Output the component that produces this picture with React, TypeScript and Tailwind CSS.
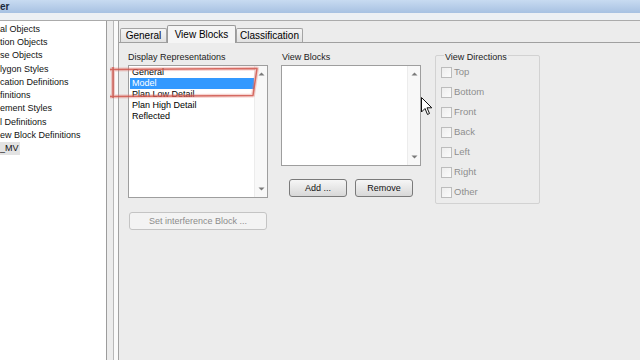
const treeItems = [
  'al Objects',
  'tion Objects',
  'se Objects',
  'lygon Styles',
  'cation Definitions',
  'finitions',
  'ement Styles',
  'l Definitions',
  'ew Block Definitions',
]

const representations = ['General', 'Model', 'Plan Low Detail', 'Plan High Detail', 'Reflected']
const directions = ['Top', 'Bottom', 'Front', 'Back', 'Left', 'Right', 'Other']

const Arrow = ({ down }: { down?: boolean }) => (
  <svg width="7" height="4" viewBox="0 0 7 4" className="block">
    <path d={down ? 'M0.5 0.5 L6.5 0.5 L3.5 3.5 Z' : 'M0.5 3.5 L6.5 3.5 L3.5 0.5 Z'} fill="#7a7a7a" />
  </svg>
)

const ScrollTrack = ({ downGap }: { downGap: string }) => (
  <div className="flex w-[13px] flex-col items-center justify-between border-l border-[#ececec] bg-[#f8f8f8]">
    <div className="mt-[6px]">
      <Arrow />
    </div>
    <div className={downGap}>
      <Arrow down />
    </div>
  </div>
)

const Tab = ({ label, active, width }: { label: string; active?: boolean; width: string }) => (
  <div
    className={
      active
        ? `-mb-px flex h-[18px] items-center justify-center rounded-t-[2px] border border-b-0 border-[#9a9a9a] bg-[#f5f5f5] ${width}`
        : `flex h-[14px] items-center justify-center rounded-t-[2px] border border-b-0 border-[#a4a4a4] bg-gradient-to-b from-[#f5f5f5] to-[#e1e1e1] ${width}`
    }
  >
    <span className={active ? 'text-[10px]' : 'pt-[1px] text-[10px]'}>{label}</span>
  </div>
)

const PushButton = ({ label, width, disabled }: { label: string; width: string; disabled?: boolean }) => (
  <div
    className={
      disabled
        ? `flex h-[18px] items-center justify-center rounded-[3px] border border-[#c4c4c4] bg-[#f3f3f3] text-[#8c8c8c] ${width}`
        : `flex h-[18px] items-center justify-center rounded-[3px] border border-[#7a7a7a] bg-gradient-to-b from-[#f6f6f6] to-[#d8d8d8] text-[#111] ${width}`
    }
  >
    {label}
  </div>
)

export default function App() {
  return (
    <div className="relative flex h-[360px] w-[640px] flex-col overflow-hidden bg-[#ececec] font-['Liberation_Sans',Arial,sans-serif] text-[9px] leading-none text-black">
      <div className="h-[13px] bg-gradient-to-b from-[#c8dbf1] to-[#a7c1e2] pt-[2px] text-[10px] font-bold text-[#1b2a3f]">er</div>
      <div className="h-[7px] bg-[#edf0f4]" />

      <div className="flex flex-1 border-t border-[#ababab]">
        {/* tree */}
        <div className="w-[107px] border-r border-[#9c9c9c] bg-white pt-[1.5px] text-[#111]">
          {treeItems.map((item) => (
            <div key={item} className="flex h-[13.3px] items-center whitespace-nowrap">
              {item}
            </div>
          ))}
          <div className="flex h-[13.3px] items-center">
            <span className="flex h-[13px] w-[20px] items-center bg-[#e3e3e3]">_MV</span>
          </div>
        </div>

        {/* splitter */}
        <div className="flex w-[11px]">
          <div className="w-[6px]" />
          <div className="w-px bg-[#b8b8b8]" />
          <div className="w-[4px] bg-[#fafafa]" />
        </div>

        {/* tab pane */}
        <div className="flex flex-1 flex-col border-l border-[#a2a2a2]">
          <div className="flex h-[22px] items-end border-b border-[#a0a0a0] pl-px">
            <Tab label="General" width="w-[47px]" />
            <Tab label="View Blocks" width="w-[69px]" active />
            <Tab label="Classification" width="w-[67px]" />
          </div>

          <div className="flex pl-[9px] pt-[9px]">
            {/* display representations */}
            <div className="flex w-[140px] flex-col">
              <div className="h-[11px] leading-[11px] text-[#222]">Display Representations</div>
              <div className="mt-[2px] flex h-[133px] border border-[#9e9e9e] bg-white">
                <div className="flex-1 pl-px pt-px">
                  {representations.map((rep) => (
                    <div
                      key={rep}
                      className={
                        rep === 'Model'
                          ? 'flex h-[11px] items-center bg-[#3399ff] pl-[2px] text-white'
                          : 'flex h-[11px] items-center pl-[2px]'
                      }
                    >
                      {rep}
                    </div>
                  ))}
                </div>
                <ScrollTrack downGap="mb-[6px]" />
              </div>
              <div className="ml-px mt-[14px]">
                <PushButton label="Set interference Block ..." width="w-[138px]" disabled />
              </div>
            </div>

            {/* view blocks */}
            <div className="ml-[13px] flex w-[140px] flex-col">
              <div className="h-[11px] pl-px leading-[11px] text-[#222]">View Blocks</div>
              <div className="mt-[2px] flex h-[101px] border border-[#9e9e9e] bg-white">
                <div className="flex-1" />
                <ScrollTrack downGap="mb-[6px]" />
              </div>
              <div className="mt-[13px] flex gap-[8px] pl-[8px]">
                <PushButton label="Add ..." width="w-[58px]" />
                <PushButton label="Remove" width="w-[58px]" />
              </div>
            </div>

            {/* view directions */}
            <div className="ml-[14px] mt-[3px] flex h-[149px] w-[105px] flex-col rounded-[2px] border border-[#d2d2d2]">
              <div className="-mt-[4px] ml-[8px] h-[11px] w-fit bg-[#ececec] px-px leading-[11px] text-[#222]">
                View Directions
              </div>
              <div className="-mt-[1px] flex flex-col pl-[5px]">
                {directions.map((dir) => (
                  <div key={dir} className="flex h-[20px] items-center">
                    <div className="h-[11px] w-[11px] border border-[#bcbcbc] bg-gradient-to-br from-[#ededed] to-[#fbfbfb]" />
                    <span className="ml-[2px] text-[9.5px] text-[#8e8e8e]">{dir}</span>
                  </div>
                ))}
              </div>
            </div>
          </div>
        </div>
      </div>

      {/* red annotation */}
      <svg className="pointer-events-none absolute left-0 top-0" width="640" height="360" viewBox="0 0 640 360">
        <path
          d="M110 69.5 L257 68.5 L253 95.5 L110 96.5 M113 67 L113 98"
          fill="none"
          stroke="rgba(230,130,120,0.35)"
          strokeWidth="4"
          strokeLinejoin="round"
        />
        <path
          d="M110 69.5 L257 68.5 L253 95.5 L110 96.5 M113 67 L113 98"
          fill="none"
          stroke="rgba(205,80,70,0.8)"
          strokeWidth="1.5"
          strokeLinejoin="round"
        />
      </svg>

      {/* mouse cursor */}
      <svg className="pointer-events-none absolute left-[421px] top-[97px]" width="12" height="19" viewBox="0 0 12 19">
        <path d="M0.5 0.5 L0.5 15 L4 11.5 L6.5 17.5 L8.5 16.5 L6 10.8 L10.8 10.8 Z" fill="#fff" stroke="#111" strokeWidth="1" strokeLinejoin="round" />
      </svg>
    </div>
  )
}
